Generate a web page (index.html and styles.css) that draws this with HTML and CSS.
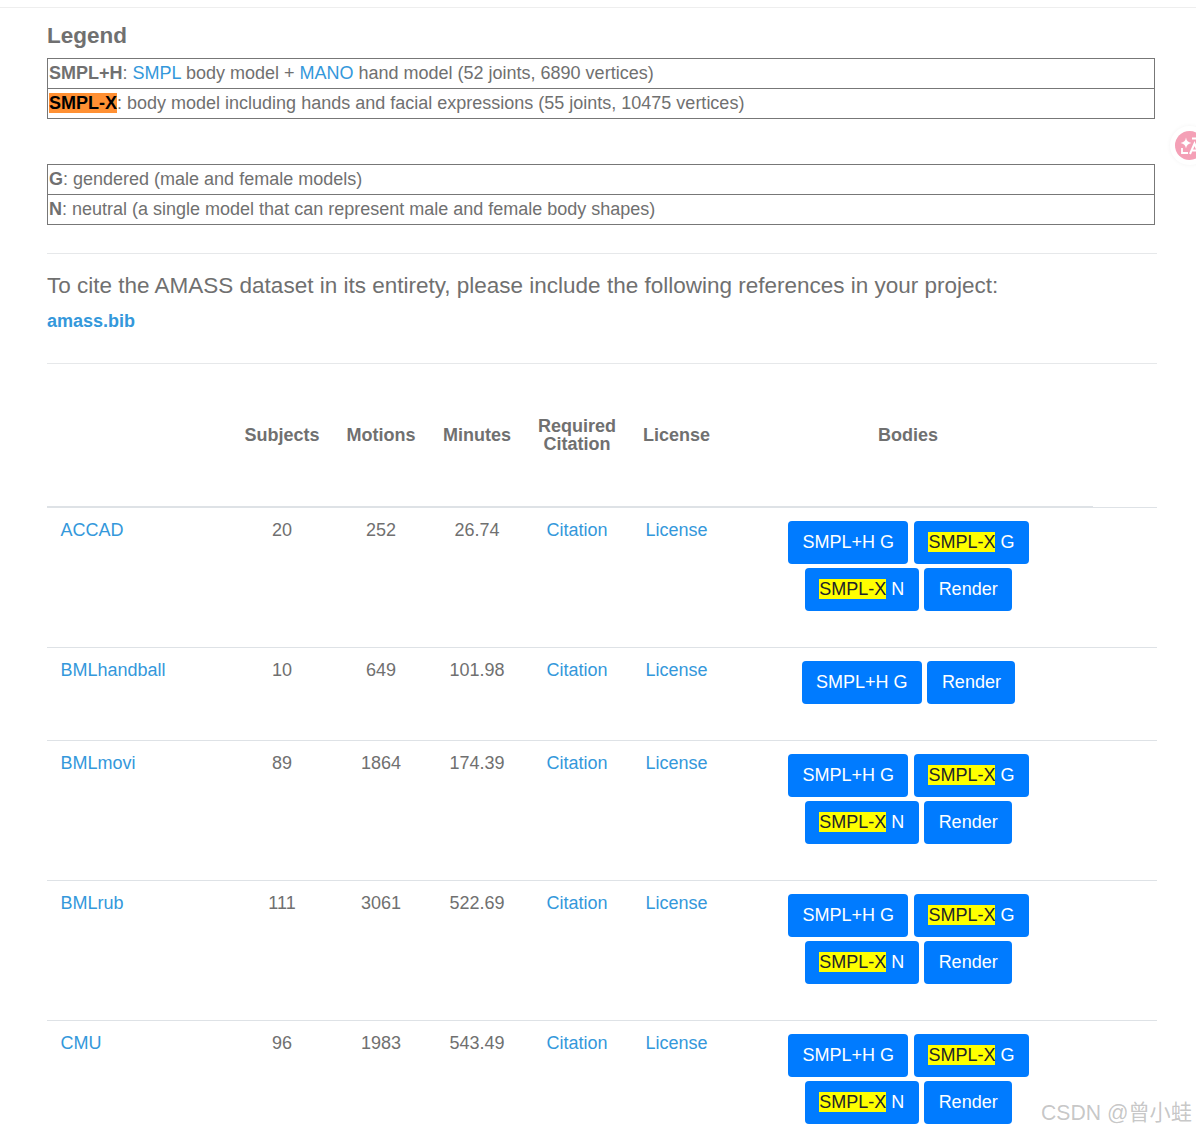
FILE: index.html
```html
<!DOCTYPE html>
<html lang="en">
<head>
<meta charset="utf-8">
<title>AMASS</title>
<link rel="stylesheet" href="styles.css">
</head>
<body>
<hr class="top-rule">
<main class="page">
  <h2 class="legend-title">Legend</h2>
  <table class="legend">
    <tr><td><b>SMPL+H</b>: <a href="#">SMPL</a> body model + <a href="#">MANO</a> hand model (52 joints, 6890 vertices)</td></tr>
    <tr><td><b class="mark-x">SMPL-X</b>: body model including hands and facial expressions (55 joints, 10475 vertices)</td></tr>
  </table>
  <table class="legend legend-second">
    <tr><td><b>G</b>: gendered (male and female models)</td></tr>
    <tr><td><b>N</b>: neutral (a single model that can represent male and female body shapes)</td></tr>
  </table>
  <hr class="rule rule-cite">
  <p class="cite">To cite the AMASS dataset in its entirety, please include the following references in your project:</p>
  <p class="bib"><a href="#">amass.bib</a></p>
  <hr class="rule rule-table">
  <table class="data">
    <thead>
      <tr>
        <th class="c-name"></th>
        <th class="c-subj">Subjects</th>
        <th class="c-mot">Motions</th>
        <th class="c-min">Minutes</th>
        <th class="c-cit">Required<br>Citation</th>
        <th class="c-lic">License</th>
        <th class="c-bod">Bodies</th>
        <th class="c-end"></th>
      </tr>
    </thead>
    <tbody>
      <tr>
        <td class="name"><a href="#">ACCAD</a></td><td>20</td><td>252</td><td>26.74</td>
        <td class="cit"><a href="#">Citation</a></td><td><a href="#">License</a></td>
        <td class="bodies"><div class="btns"><a class="btn">SMPL+H G</a><a class="btn"><span class="hl">SMPL-X</span> G</a><a class="btn"><span class="hl">SMPL-X</span> N</a><a class="btn">Render</a></div></td><td></td>
      </tr>
      <tr>
        <td class="name"><a href="#">BMLhandball</a></td><td>10</td><td>649</td><td>101.98</td>
        <td class="cit"><a href="#">Citation</a></td><td><a href="#">License</a></td>
        <td class="bodies"><div class="btns"><a class="btn">SMPL+H G</a><a class="btn">Render</a></div></td><td></td>
      </tr>
      <tr>
        <td class="name"><a href="#">BMLmovi</a></td><td>89</td><td>1864</td><td>174.39</td>
        <td class="cit"><a href="#">Citation</a></td><td><a href="#">License</a></td>
        <td class="bodies"><div class="btns"><a class="btn">SMPL+H G</a><a class="btn"><span class="hl">SMPL-X</span> G</a><a class="btn"><span class="hl">SMPL-X</span> N</a><a class="btn">Render</a></div></td><td></td>
      </tr>
      <tr>
        <td class="name"><a href="#">BMLrub</a></td><td>111</td><td>3061</td><td>522.69</td>
        <td class="cit"><a href="#">Citation</a></td><td><a href="#">License</a></td>
        <td class="bodies"><div class="btns"><a class="btn">SMPL+H G</a><a class="btn"><span class="hl">SMPL-X</span> G</a><a class="btn"><span class="hl">SMPL-X</span> N</a><a class="btn">Render</a></div></td><td></td>
      </tr>
      <tr>
        <td class="name"><a href="#">CMU</a></td><td>96</td><td>1983</td><td>543.49</td>
        <td class="cit"><a href="#">Citation</a></td><td><a href="#">License</a></td>
        <td class="bodies"><div class="btns"><a class="btn">SMPL+H G</a><a class="btn"><span class="hl">SMPL-X</span> G</a><a class="btn"><span class="hl">SMPL-X</span> N</a><a class="btn">Render</a></div></td><td></td>
      </tr>
    </tbody>
  </table>
</main>
<div class="float-badge" aria-hidden="true">
  <svg viewBox="0 0 29 29" width="29" height="29">
    <circle cx="14.5" cy="14.5" r="14.5" fill="#f4a0b6"/>
    <path d="M11 6.5 Q11.6 11.2 16.5 12 Q11.6 12.8 11 17.5 Q10.4 12.8 5.5 12 Q10.4 11.2 11 6.5Z" fill="#fff"/>
    <path d="M7 17V22H13M17 7.5H23" fill="none" stroke="#fff" stroke-width="1.8"/>
    <path d="M15 23 L19.5 12.5 L24 23 M16.6 19.5H22.4" fill="none" stroke="#fff" stroke-width="2"/>
  </svg>
</div>
<div class="watermark">CSDN @曾小蛙</div>
</body>
</html>
```
FILE: styles.css
```css
html, body {
  margin: 0;
  height: 1133px;
  overflow: hidden;
  background: #fff;
}
body {
  position: relative;
  font-family: "Liberation Sans", Arial, sans-serif;
  font-size: 18px;
  line-height: 27px;
  color: #707070;
}
a {
  color: #3498db;
  text-decoration: none;
}
.top-rule {
  margin: 7px 0 0;
  border: 0;
  border-top: 1px solid #eee;
}
.page {
  width: 1110px;
  margin-left: 47px;
}
.legend-title {
  margin: 0;
  padding-top: 14px;
  height: 36px;
  font-size: 22.5px;
  line-height: 28px;
  font-weight: 700;
  color: #707070;
}
.legend {
  width: 1108px;
  border-collapse: collapse;
}
.legend td {
  height: 29px;
  padding: 0 1px;
  border: 1px solid #777;
  line-height: 27px;
}
.legend-second {
  margin-top: 45px;
}
.mark-x {
  background: #ff9033;
  color: #000;
}
.rule {
  border: 0;
  border-top: 1px solid #e6e8ea;
  margin: 0;
}
.rule-cite {
  margin-top: 28px;
}
.cite {
  margin: 16px 0 0;
  font-size: 22.5px;
  line-height: 32px;
}
.bib {
  margin: 6px 0 0;
  font-weight: 700;
  line-height: 27px;
}
.rule-table {
  margin-top: 28px;
}
.data {
  width: 1110px;
  table-layout: fixed;
  border-collapse: collapse;
}
.data th,
.data td {
  box-sizing: border-box;
}
.c-name { width: 184px; }
.c-subj { width: 102px; }
.c-mot { width: 96px; }
.c-min { width: 96px; }
.c-cit { width: 105px; }
.c-lic { width: 93px; }
.c-bod { width: 370px; }
.c-end { width: 64px; }
.data th {
  height: 143px;
  padding: 0 13px;
  text-align: center;
  vertical-align: middle;
  font-weight: 700;
  line-height: 18px;
  border-bottom: 2px solid #dee2e6;
  white-space: nowrap;
}
.data th.c-cit,
.data td.cit {
  padding-left: 13px;
  padding-right: 14px;
}
.data th.c-end {
  border-bottom: 1px solid #dee2e6;
}
.data td {
  padding: 8.5px 13px 0;
  text-align: center;
  vertical-align: top;
  border-top: 1px solid #dee2e6;
}
.data td.name {
  text-align: left;
  padding-left: 13.5px;
}
.data td.bodies {
  padding: 13px 12.5px 36px 13.5px;
}
.btns {
  display: flex;
  flex-wrap: wrap;
  justify-content: center;
  gap: 4px 5.5px;
}
.btn {
  display: block;
  padding: 8px 14.4px;
  line-height: 27px;
  color: #fff;
  background: #007bff;
  border-radius: 4px;
  white-space: nowrap;
}
.hl {
  background: #ff0;
  color: #212529;
}
.float-badge {
  position: absolute;
  left: 1170px;
  top: 126px;
  width: 39px;
  height: 39px;
  border-radius: 50%;
  background: #fff;
  box-shadow: 0 0 4px rgba(0, 0, 0, .05);
  display: flex;
  align-items: center;
  justify-content: center;
}
.watermark {
  position: absolute;
  right: 4px;
  top: 1098px;
  font-size: 21.2px;
  line-height: 30px;
  font-family: "Liberation Sans", "Noto Sans CJK SC", sans-serif;
  color: rgba(130, 130, 130, .45);
  text-shadow: 0 0 1px rgba(255, 255, 255, .6);
  white-space: nowrap;
}
```
